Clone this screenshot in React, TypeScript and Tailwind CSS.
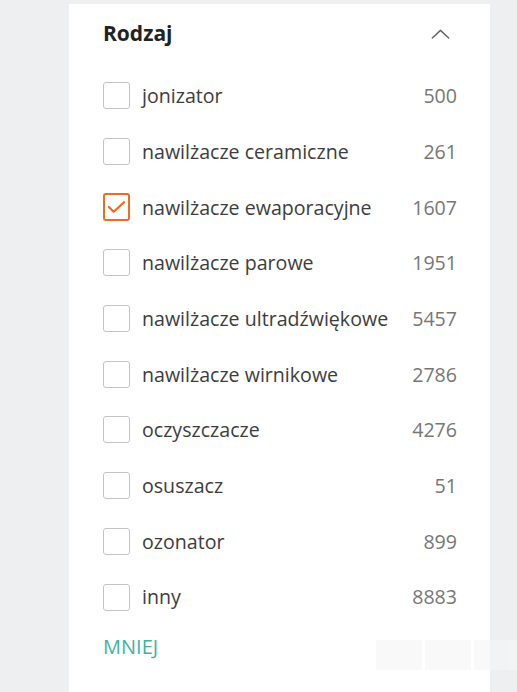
const options = [
  { label: "jonizator", count: 500 },
  { label: "nawilżacze ceramiczne", count: 261 },
  { label: "nawilżacze ewaporacyjne", count: 1607, checked: true },
  { label: "nawilżacze parowe", count: 1951 },
  { label: "nawilżacze ultradźwiękowe", count: 5457 },
  { label: "nawilżacze wirnikowe", count: 2786 },
  { label: "oczyszczacze", count: 4276 },
  { label: "osuszacz", count: 51 },
  { label: "ozonator", count: 899 },
  { label: "inny", count: 8883 },
];

function Checkbox({ checked }: { checked?: boolean }) {
  if (checked) {
    return (
      <span className="flex h-[28px] w-[27px] shrink-0 items-center justify-center rounded-[3px] border-2 border-[#f26b21] bg-white">
        <svg viewBox="0 0 20 14" className="h-[14px] w-[19px]" fill="none" stroke="#f26b21" strokeWidth="2.4" strokeLinecap="round" strokeLinejoin="round">
          <path d="M2 7l5 5L18 2" />
        </svg>
      </span>
    );
  }
  return <span className="h-[27px] w-[27px] shrink-0 rounded-[3px] border border-[#c4c4c4] bg-white" />;
}

export default function App() {
  return (
    <div className="flex h-[692px] w-[517px] bg-[#eeeff1] font-['Open_Sans',sans-serif]">
      <div className="relative ml-[69px] mt-1 w-[421px] bg-white pl-[34px] pr-[33px]">
        <div className="flex h-[64px] items-center justify-between pb-1">
          <h3 className="text-[21px] font-bold text-[#222]">Rodzaj</h3>
          <svg viewBox="0 0 20 11" className="mr-[7px] h-[10px] w-[19px]" fill="none" stroke="#666" strokeWidth="1.6" strokeLinecap="round" strokeLinejoin="round">
            <path d="M1 10L10 1.5L19 10" />
          </svg>
        </div>
        <ul>
          {options.map((o) => (
            <li key={o.label} className="flex h-[55.7px] items-center gap-[12px]">
              <Checkbox checked={o.checked} />
              <span className="flex-1 text-[19.6px] text-[#3d3d3d]">{o.label}</span>
              <span className="text-[19.6px] text-[#777]">{o.count}</span>
            </li>
          ))}
        </ul>
        <button className="mt-[7px] text-[20px] text-[#3fb3a3]">MNIEJ</button>
        <div className="absolute bottom-[22px] right-[-30px] flex gap-[3px] opacity-60">
          <span className="h-[30px] w-[46px] bg-[#f6f6f6]" />
          <span className="h-[30px] w-[46px] bg-[#f6f6f6]" />
          <span className="h-[30px] w-[46px] bg-[#f6f6f6]" />
        </div>
      </div>
    </div>
  );
}
